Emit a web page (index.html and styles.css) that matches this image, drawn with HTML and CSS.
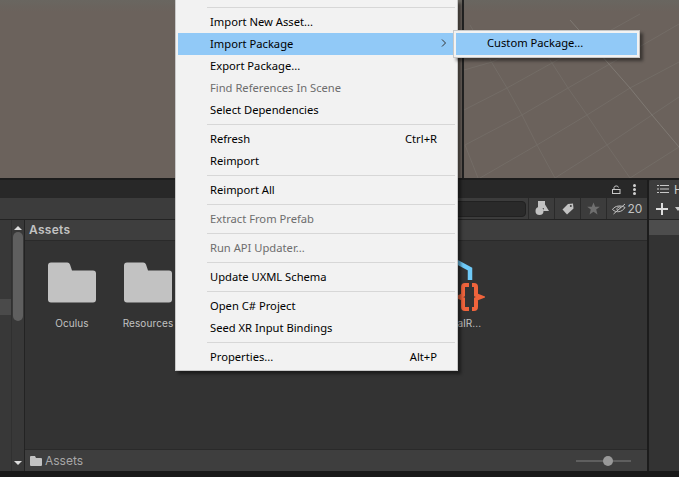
FILE: index.html
```html
<!DOCTYPE html>
<html lang="en">
<head>
    <meta charset="UTF-8">
    <title>Unity Assets Menu</title>
    <link rel="stylesheet" href="styles.css">
</head>
<body>

<div class="editor">
    <div class="scene">
        <svg class="grid" width="679" height="178" viewBox="0 0 679 178">
            <path d="M464 70L492 62L560 30M464 110L507 88L552 63L640 14M465 145L522 115L568 88L608 65L679 24M480 178L537 145L587 115L630 88L679 62M555 178L607 145L652 115L679 97M630 178L679 147M465 145L478 178M470 25L492 63L507 88L522 115L537 145L555 178M530 30L552 63L568 88L587 115L607 145L630 178" fill="none" stroke="#736c66" stroke-width="1"/>
            <path d="M570 20L608 63L630 88L652 115L679 147" fill="none" stroke="#7f7973" stroke-width="1"/>
        </svg>
        <div class="scene-split"></div>
    </div>

    <div class="bottom">
        <div class="project">
            <div class="tabbar">
                <svg class="tab-icon" width="9" height="9" viewBox="0 0 9 9">
                    <path d="M2 4V2.500a2.300 2 0 0 1 4.500 0" fill="none" stroke="#c8c8c8" stroke-width="1"/>
                    <rect x="0.500" y="4.500" width="7.500" height="4" fill="none" stroke="#c8c8c8" stroke-width="1"/>
                </svg>
                <div class="dots"><span></span><span></span><span></span></div>
            </div>
            <div class="toolbar">
                <div class="search"></div>
                <div class="tool">
                    <svg width="16" height="15" viewBox="0 0 16 15">
                        <rect x="4" y="0" width="7" height="7" fill="#c2c2c2"/>
                        <circle cx="5.500" cy="10" r="4" fill="#c2c2c2"/>
                        <path d="M11 3.500L15 10H9Z" fill="#c2c2c2"/>
                    </svg>
                </div>
                <div class="tool">
                    <svg width="12" height="12" viewBox="0 0 12 12">
                        <path d="M6 1L11 0.500L11.500 5.500L5 11.500L0.500 6.500Z" fill="#c2c2c2"/>
                        <circle cx="8.800" cy="3" r="1" fill="#3c3c3c"/>
                    </svg>
                </div>
                <div class="tool">
                    <svg width="13" height="13" viewBox="0 0 13 13">
                        <path d="M6.500 0.500L8.200 4.700H12.800L9.200 7.500L10.500 12.500L6.500 9.700L2.500 12.500L3.800 7.500L0.200 4.700H4.800Z" fill="#6f6f6f"/>
                    </svg>
                </div>
                <div class="tool tool-count">
                    <svg width="14" height="12" viewBox="0 0 14 12">
                        <path d="M0.500 6.500C3 2.500 9 2 13 4.500C10 9.500 4 10 0.500 6.500Z" fill="none" stroke="#c2c2c2" stroke-width="1"/>
                        <path d="M1.500 11L13 1" stroke="#c2c2c2" stroke-width="1"/>
                        <path d="M5 7a2.500 2.500 0 0 1 4-2.500" fill="none" stroke="#c2c2c2" stroke-width="1"/>
                    </svg>
                    <span>20</span>
                </div>
            </div>
            <div class="browser">
                <div class="tree">
                    <div class="tree-list"><div class="tree-row"></div></div>
                    <div class="scrollbar">
                        <span class="arrow-up"></span>
                        <div class="thumb"></div>
                        <span class="arrow-down"></span>
                    </div>
                </div>
                <div class="files">
                    <div class="files-head">Assets</div>
                    <div class="files-grid">
                        <div class="asset">
                            <svg class="folder" width="48" height="40" viewBox="0 0 48 40">
                                <path d="M0 3a3 3 0 0 1 3-3H19a3 3 0 0 1 3 2L24 8H45a3 3 0 0 1 3 3V37a3 3 0 0 1-3 3H3a3 3 0 0 1-3-3Z" fill="#c2c2c2"/>
                            </svg>
                            <span>Oculus</span>
                        </div>
                        <div class="asset">
                            <svg class="folder" width="48" height="40" viewBox="0 0 48 40">
                                <path d="M0 3a3 3 0 0 1 3-3H19a3 3 0 0 1 3 2L24 8H45a3 3 0 0 1 3 3V37a3 3 0 0 1-3 3H3a3 3 0 0 1-3-3Z" fill="#c2c2c2"/>
                            </svg>
                            <span>Resources</span>
                        </div>
                        <div class="asset asset-script">
                            <svg class="script" width="56" height="56" viewBox="0 0 56 56">
                                <path d="M26 3L41 11V22" fill="none" stroke="#6fcaf8" stroke-width="4.500"/>
                                <path d="M40 27H36Q34 27 34 29V37L30 39L34 41V49Q34 51 36 51H40" fill="none" stroke="#f0643c" stroke-width="4"/>
                                <path d="M43 27H45Q47 27 47 29V37L52 39L47 41V49Q47 51 45 51H43" fill="none" stroke="#f0643c" stroke-width="4"/>
                            </svg>
                            <span>UniversalR...</span>
                        </div>
                    </div>
                    <div class="files-foot">
                        <svg width="12" height="10" viewBox="0 0 12 10">
                            <path d="M0 1a1 1 0 0 1 1-1H5L6 2H11a1 1 0 0 1 1 1V9a1 1 0 0 1-1 1H1a1 1 0 0 1-1-1Z" fill="#c2c2c2"/>
                        </svg>
                        <span class="foot-path">Assets</span>
                        <div class="slider"><span class="knob"></span></div>
                    </div>
                </div>
            </div>
        </div>
        <div class="hierarchy">
            <div class="h-tab">
                <svg width="12" height="10" viewBox="0 0 12 10">
                    <path d="M3 1.500H12M3 5H12M3 8.500H12" stroke="#c8c8c8" stroke-width="1"/>
                    <path d="M0 1.500H2M0 5H2M0 8.500H2" stroke="#c8c8c8" stroke-width="1"/>
                </svg>
                <span>H</span>
            </div>
            <div class="h-tools">
                <svg width="12" height="12" viewBox="0 0 12 12">
                    <path d="M6 0V12M0 6H12" stroke="#dcdcdc" stroke-width="2"/>
                </svg>
                <span class="caret"></span>
            </div>
            <div class="h-row"></div>
        </div>
    </div>
    <div class="bottom-bar"></div>
</div>

<div class="menu">
    <div class="sep"></div>
    <div class="item">Import New Asset...</div>
    <div class="item active">Import Package
        <svg class="chev" width="6" height="8" viewBox="0 0 6 8"><path d="M1 0.500L4.500 4L1 7.500" fill="none" stroke="#333" stroke-width="1"/></svg>
    </div>
    <div class="item">Export Package...</div>
    <div class="item off">Find References In Scene</div>
    <div class="item">Select Dependencies</div>
    <div class="sep"></div>
    <div class="item">Refresh<span class="key">Ctrl+R</span></div>
    <div class="item">Reimport</div>
    <div class="sep"></div>
    <div class="item">Reimport All</div>
    <div class="sep"></div>
    <div class="item off">Extract From Prefab</div>
    <div class="sep"></div>
    <div class="item off">Run API Updater...</div>
    <div class="sep"></div>
    <div class="item">Update UXML Schema</div>
    <div class="sep"></div>
    <div class="item">Open C# Project</div>
    <div class="item">Seed XR Input Bindings</div>
    <div class="sep"></div>
    <div class="item">Properties...<span class="key">Alt+P</span></div>
</div>

<div class="submenu">
    <div class="sub-item">Custom Package...</div>
</div>

</body>
</html>
```

FILE: styles.css
```css
html, body {
    margin: 0;
    padding: 0;
    height: 100%;
    overflow: hidden;
    background-color: #191919;
}
body {
    position: relative;
    font-family: "Noto Sans", "Open Sans", sans-serif;
    font-size: 11.2px;
}
.editor {
    display: flex;
    flex-direction: column;
    height: 477px;
}
.scene {
    position: relative;
    height: 178px;
    background: linear-gradient(#696660, #6b625c 12px);
    overflow: hidden;
}
.grid {
    position: absolute;
    left: 0;
    top: 0;
}
.scene-split {
    position: absolute;
    left: 462px;
    top: 0;
    width: 2px;
    height: 100%;
    background-color: #222;
}
.bottom {
    display: flex;
    height: 293px;
    background-color: #1c1c1c;
    padding-top: 2px;
    box-sizing: border-box;
    gap: 2px;
}
.project {
    flex: 0 0 647px;
    display: flex;
    flex-direction: column;
}
.tabbar {
    height: 18px;
    background-color: #282828;
    display: flex;
    justify-content: flex-end;
    align-items: center;
    gap: 12px;
    padding-right: 11px;
}
.dots {
    display: flex;
    flex-direction: column;
    gap: 1px;
}
.dots span {
    width: 3px;
    height: 3px;
    border-radius: 50%;
    background-color: #d0d0d0;
}
.toolbar {
    height: 22px;
    background-color: #3c3c3c;
    display: flex;
    align-items: stretch;
    border-bottom: 1px solid #232323;
    box-sizing: border-box;
}
.search {
    flex: 1;
    margin: 3px 2px 2px 300px;
    background-color: #2a2a2a;
    border: 1px solid #212121;
    border-radius: 4px;
}
.tool {
    width: 25px;
    border-left: 1px solid #2a2a2a;
    display: flex;
    align-items: center;
    justify-content: center;
}
.tool-count {
    width: 40px;
    gap: 2px;
    color: #c2c2c2;
    font-family: Inter, sans-serif;
    font-size: 12px;
}
.browser {
    flex: 1;
    display: flex;
    min-height: 0;
}
.tree {
    flex: 0 0 24px;
    display: flex;
    background-color: #383838;
    border-right: 1px solid #232323;
}
.tree-list {
    width: 11px;
    border-right: 1px solid #303030;
    padding-top: 79px;
}
.tree-row {
    height: 16px;
    background-color: #4a4a4a;
}
.scrollbar {
    width: 12px;
    display: flex;
    flex-direction: column;
    align-items: center;
    padding-top: 6px;
    box-sizing: border-box;
}
.arrow-up {
    border: 4px solid transparent;
    border-top: 0;
    border-bottom: 4px solid #dcdcdc;
}
.arrow-down {
    margin-top: auto;
    margin-bottom: 6px;
    border: 4px solid transparent;
    border-bottom: 0;
    border-top: 4px solid #dcdcdc;
}
.thumb {
    width: 10px;
    height: 89px;
    margin-top: 2px;
    border-radius: 5px;
    background-color: #5f5f5f;
}
.files {
    flex: 1;
    display: flex;
    flex-direction: column;
    background-color: #333;
    min-width: 0;
}
.files-head {
    height: 21px;
    box-sizing: border-box;
    background-color: #3e3e3e;
    border-bottom: 1px solid #2a2a2a;
    color: #c2c2c2;
    font-family: Inter, sans-serif;
    font-size: 12px;
    font-weight: 600;
    letter-spacing: 0.3px;
    padding-left: 4px;
    line-height: 20px;
}
.files-grid {
    flex: 1;
    display: flex;
    padding: 21px 0 0 9px;
}
.asset {
    width: 76px;
    flex: none;
    display: flex;
    flex-direction: column;
    align-items: center;
    color: #c2c2c2;
    font-family: Inter, sans-serif;
    font-size: 10px;
    letter-spacing: 0.1px;
}
.folder {
    height: 41px;
}
.asset span {
    margin-top: 14px;
}
.asset-script {
    margin-left: 227px;
    margin-top: -4px;
}
.script {
    margin-left: 12px;
}
.asset-script span {
    margin-top: 3px;
}
.files-foot {
    height: 22px;
    box-sizing: border-box;
    background-color: #3e3e3e;
    border-top: 1px solid #2a2a2a;
    display: flex;
    align-items: center;
    padding-left: 5px;
    gap: 3px;
    color: #a8a8a8;
    font-family: Inter, sans-serif;
    font-size: 12px;
}
.slider {
    position: relative;
    width: 55px;
    height: 2px;
    margin-left: auto;
    margin-right: 16px;
    background-color: #5f5f5f;
}
.knob {
    position: absolute;
    left: 27px;
    top: -4px;
    width: 10px;
    height: 10px;
    border-radius: 50%;
    background-color: #999;
}
.hierarchy {
    flex: 1;
    display: flex;
    flex-direction: column;
    background-color: #333;
}
.h-tab {
    height: 18px;
    background-color: #3c3c3c;
    border-radius: 3px 0 0 0;
    color: #c8c8c8;
    font-family: Inter, sans-serif;
    font-size: 12px;
    display: flex;
    align-items: center;
    gap: 5px;
    padding-left: 8px;
}
.h-tools {
    height: 22px;
    box-sizing: border-box;
    background-color: #3c3c3c;
    border-bottom: 1px solid #232323;
    display: flex;
    align-items: center;
    gap: 7px;
    padding-left: 7px;
}
.caret {
    border: 3px solid transparent;
    border-bottom: 0;
    border-top: 4px solid #c8c8c8;
}
.h-row {
    height: 15px;
    background-color: #4d4d4d;
}
.bottom-bar {
    flex: 1;
    background-color: #191919;
}

.menu {
    position: absolute;
    left: 175px;
    top: 0;
    width: 283px;
    box-sizing: border-box;
    padding: 4px 3px 2px 2px;
    background-color: #f2f2f2;
    border: 1px solid #c8c8c8;
    border-top: 0;
    box-shadow: 3px 3px 3px rgba(0, 0, 0, 0.45);
    color: #000;
}
.item {
    display: flex;
    align-items: center;
    height: 22px;
    box-sizing: border-box;
    padding: 0 17px 2px 32px;
}
.item.active {
    background-color: #91c9f7;
}
.item.off {
    color: #6d6d6d;
}
.key {
    margin-left: auto;
}
.chev {
    margin-left: auto;
    margin-right: -10px;
}
.sep {
    height: 1px;
    margin: 3px -1px 3px 29px;
    background-color: #d7d7d7;
}
.submenu {
    position: absolute;
    left: 453px;
    top: 30px;
    width: 187px;
    box-sizing: border-box;
    padding: 2px;
    background-color: #f2f2f2;
    border: 1px solid #c8c8c8;
    box-shadow: 3px 3px 3px rgba(0, 0, 0, 0.45);
}
.sub-item {
    height: 22px;
    line-height: 20px;
    padding-left: 31px;
    background-color: #91c9f7;
    color: #000;
}
```
